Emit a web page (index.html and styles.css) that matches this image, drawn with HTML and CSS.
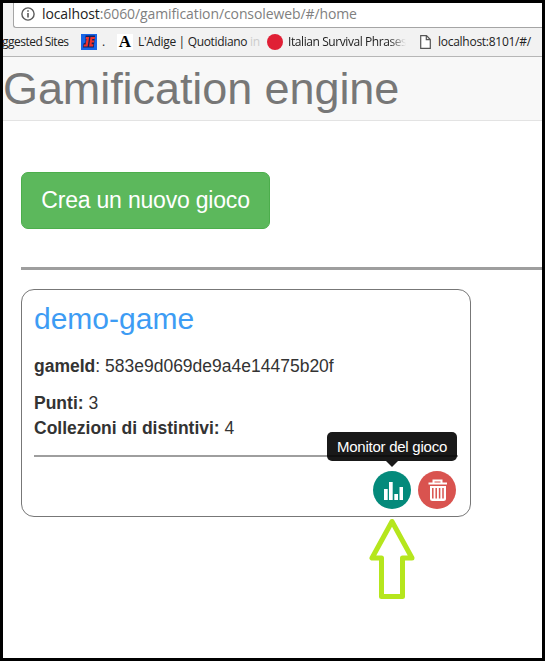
FILE: index.html
```
<!DOCTYPE html>
<html lang="it">
<head>
<meta charset="utf-8">
<title>Gamification engine</title>
<link rel="stylesheet" href="styles.css">
</head>
<body>
<div class="window">
  <div class="toolbar">
    <div class="address">
      <svg class="info" width="14" height="14" viewBox="0 0 14 14"><circle cx="7" cy="7" r="6.1" fill="none" stroke="#5a5a5a" stroke-width="1.4"/><path d="M6.2 3.2h1.6v1.6H6.2zM6.2 6h1.6v4.6H6.2z" fill="#5a5a5a"/></svg>
      <span class="url"><b>localhost</b>:6060/gamification/consoleweb/#/home</span>
    </div>
  </div>
  <div class="bookmarks">
    <span class="mark suggested">ggested Sites</span>
    <svg class="fav-blue" width="16" height="16" viewBox="0 0 16 16"><path d="M0 0h16v16H0z" fill="#1765e8"/><path d="M4.500 1.500h9.500l-1.200 12H2l.5-4 2-1z" fill="#15205c"/><path d="M5 3h3.200l-1.600 9.500H2.500l.4-2h1.700l.9-5.500H4.700z" fill="#f0302b"/><path d="M9.500 3H14l-.3 2h-2.400l-.2 1.600h2.200l-.3 2h-2.200l-.2 1.600h1.900l-.4 2.300H8.100z" fill="#f0302b"/></svg>
    <span class="mark dot">.</span>
    <span class="fav-a">A</span>
    <span class="mark adige">L'Adige | Quotidiano <i>in</i></span>
    <span class="fav-red"></span>
    <span class="mark italian">Italian Survival Phrases</span>
    <svg class="fav-page" width="11" height="14" viewBox="0 0 11 14"><path d="M.7.7h5.800l3.800 3.800v8.800H.7zM6.300.7v4h4" fill="#fff" stroke="#555" stroke-width="1.2"/></svg>
    <span class="mark local">localhost:8101/#/</span>
  </div>
  <header class="header"><h1>Gamification engine</h1></header>
  <main class="content">
    <button class="create">Crea un nuovo gioco</button>
    <hr class="rule">
    <section class="card">
      <h2>demo-game</h2>
      <p class="game-id"><b>gameId</b>: 583e9d069de9a4e14475b20f</p>
      <p><b>Punti:</b> 3</p>
      <p><b>Collezioni di distintivi:</b> 4</p>
      <hr class="card-rule">
      <div class="actions">
        <div class="round monitor">
          <svg width="38" height="38" viewBox="0 0 38 38"><path d="M11 18h3.700v11H11zM16 11h3.700v18H16zM21.300 23h3.700v6h-3.700zM26.500 16h3.500v13h-3.500z" fill="#fff"/></svg>
          <div class="tooltip">Monitor del gioco</div>
          <svg class="pointer" width="48" height="83" viewBox="0 0 48 83"><path d="M24 4.500L4 41h9.500v38.500h21V41H44z" fill="none" stroke="#b5e61d" stroke-width="5" stroke-linejoin="round"/></svg>
        </div>
        <div class="round remove">
          <svg width="38" height="38" viewBox="0 0 38 38"><path d="M15.500 12V9.500h8V12M10.500 12.500h18.500" fill="none" stroke="#fff" stroke-width="2"/><path d="M12 15h16v12.500q0 2.500-2.500 2.500h-11q-2.500 0-2.500-2.500z" fill="#fff"/><path d="M14.800 17v10.500M18.200 17v10.500M21.600 17v10.500M25 17v10.500" stroke="#d9534f" stroke-width="1.500"/></svg>
        </div>
      </div>
    </section>
  </main>
</div>
</body>
</html>
```
FILE: styles.css
```
* { box-sizing: border-box; }
body { margin: 0; font-family: "Liberation Sans", Arial, sans-serif; color: #333; }
.window { width: 545px; height: 661px; border: 3px solid #000; background: #fff; overflow: hidden; }
.toolbar { height: 25px; padding-left: 10px; background: #f2f2f2; }
.address { height: 25px; display: flex; align-items: flex-start; background: #fff; border: 1px solid #a5a5a5; border-width: 0 0 1px 1px; border-bottom-left-radius: 3px; padding-left: 7px; }
.info { margin-top: 4px; flex: none; }
.url { margin-left: 7px; font: 14px/22px "Open Sans", "Noto Sans", sans-serif; color: #808080; white-space: nowrap; letter-spacing: -0.35px; letter-spacing: -0.1px; }
.url b { font-weight: 400; color: #222; }
.bookmarks { height: 29px; display: flex; align-items: center; background: #f2f2f2; border-bottom: 1px solid #b6b6b6; font: 12px/18px "Open Sans", "Noto Sans", sans-serif; color: #222; }
.mark { white-space: nowrap; flex: none; height: 18px; }
.mark i { font-style: normal; color: #ccc; }
.suggested { width: 74px; margin-left: -1px; letter-spacing: -0.52px; }
.fav-blue { margin-left: 5px; flex: none; }
.dot { width: 8px; margin-left: 5px; }
.fav-a { width: 16px; height: 16px; margin-left: 7px; flex: none; background: #fff; color: #000; font: bold 17px/16px "Liberation Serif", serif; text-align: center; }
.adige { width: 117px; margin-left: 5px; letter-spacing: -0.33px; }
.fav-red { width: 16px; height: 16px; flex: none; margin-left: 12px; border-radius: 50%; background: #e01f35; }
.italian { width: 118px; margin-left: 5px; letter-spacing: -0.42px; -webkit-mask-image: linear-gradient(90deg, #000 86%, transparent); mask-image: linear-gradient(90deg, #000 86%, transparent); }
.fav-page { margin-left: 14px; flex: none; }
.local { margin-left: 7px; letter-spacing: -0.27px; }
.header { height: 64px; background: #f8f8f8; border-bottom: 1px solid #e3e3e3; }
h1 { margin: 0; padding-top: 7px; font-size: 45px; line-height: 50px; font-weight: 400; color: #777; white-space: nowrap; letter-spacing: -0.08px; }
.content { padding: 51px 0 0 18px; }
.create { display: block; width: 249px; height: 57px; padding: 0; border: 1px solid #4cae4c; border-radius: 7px; background: #5cb85c; color: #fff; font: 23px/55px "Liberation Sans", Arial, sans-serif; letter-spacing: -0.2px; }
.rule { height: 3px; border: 0; margin: 38px 0 19px; background: #9e9e9e; }
.card { width: 450px; height: 228px; border: 1px solid #777; border-radius: 13px; padding: 12px 12px 0; }
h2 { margin: 0 0 18px; font-size: 30px; line-height: 34px; font-weight: 400; color: #3d9cf4; }
p { margin: 0; font-size: 17.5px; line-height: 25px; }
.game-id { margin-bottom: 12px; }
.card-rule { height: 2px; border: 0; margin: 14px 0; background: #9e9e9e; }
.actions { display: flex; justify-content: flex-end; gap: 7px; padding-right: 2px; }
.round { position: relative; width: 38px; height: 38px; border-radius: 50%; }
.round > svg { display: block; }
.monitor { background: #048a7b; }
.remove { background: #d9534f; }
.tooltip { position: absolute; left: -46px; top: -39px; width: 130px; height: 29px; border-radius: 5px; background: rgba(0, 0, 0, 0.9); color: #fff; font-size: 15px; line-height: 30px; text-align: center; white-space: nowrap; letter-spacing: -0.25px; }
.tooltip::after { content: ""; position: absolute; left: 59px; top: 29px; border: 6px solid transparent; border-top-color: rgba(0, 0, 0, 0.9); border-bottom: 0; }
.round > .pointer { position: absolute; left: -5px; top: 46px; }
```
